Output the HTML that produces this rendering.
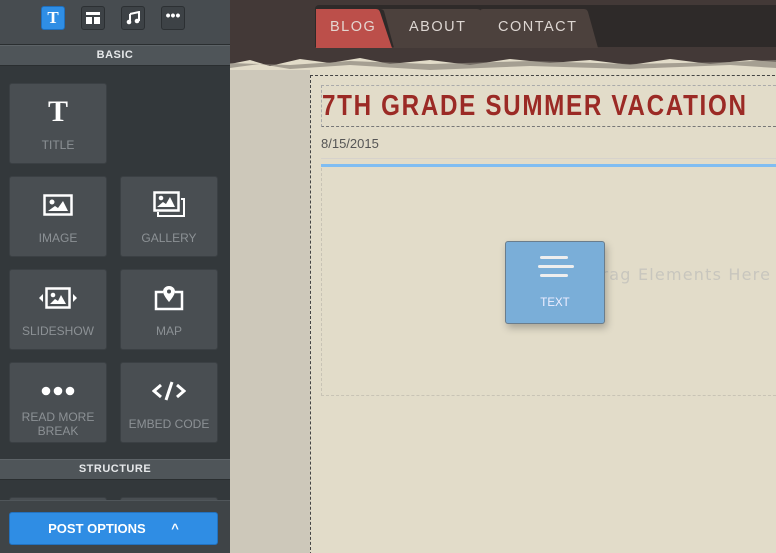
<!DOCTYPE html>
<html><head><style>
*{margin:0;padding:0;box-sizing:border-box}
html,body{width:776px;height:553px;overflow:hidden}
body{position:relative;font-family:"Liberation Sans",sans-serif;background:#e2dcc9}
.sb{position:absolute;left:0;top:0;width:230px;height:553px;background:#33383b;overflow:hidden}
.top{position:absolute;left:0;top:0;width:230px;height:45px;background:#474c50;border-bottom:1px solid #2a2e30}
.tb{position:absolute;top:6px;width:24px;height:24px;border-radius:3px;background:#3d4246;border:1px solid #2c3033;color:#fff;text-align:center;font-weight:bold;line-height:22px;font-size:14px}
.hdr{position:absolute;left:0;width:230px;height:21px;background:#4f5559;border-top:1px solid #5d6367;border-bottom:1px solid #2a2e30;color:#e6e8ea;font-size:11px;font-weight:bold;text-align:center;line-height:19px;letter-spacing:.5px}
.tile{position:absolute;width:98px;height:81px;background:#494e52;border:1px solid #3b4044;border-radius:3px;color:#8c9195;font-size:12px;text-align:center}
.tile .ic{position:absolute;left:0;right:0;top:14px;height:28px;display:flex;justify-content:center;align-items:center}
.tile .lb{position:absolute;left:0;right:0;top:54px;line-height:14px}
.main{position:absolute;left:230px;top:0;width:546px;height:553px;overflow:hidden}
</style></head><body>
<div class="sb">
 <div class="top">
  <div class="tb" style="left:41px;background:#2f8ee5;border-color:#1f6fbd;font-family:'Liberation Serif',serif;font-size:17px">T</div>
  <div class="tb" style="left:81px"><svg width="14" height="12" viewBox="0 0 14 12" style="margin-top:5px"><rect x="0" y="0" width="14" height="3" fill="#fff"/><rect x="0" y="5" width="6" height="7" fill="#fff"/><rect x="8" y="5" width="6" height="7" fill="#fff"/></svg></div>
  <div class="tb" style="left:121px"><svg width="14" height="14" viewBox="0 0 14 14" style="margin-top:4px"><path d="M4 3 L13 1 V10" stroke="#fff" stroke-width="2" fill="none"/><circle cx="3" cy="11" r="2.3" fill="#fff"/><circle cx="11" cy="10" r="2.3" fill="#fff"/><path d="M4 3V11" stroke="#fff" stroke-width="2"/></svg></div>
  <div class="tb" style="left:161px;line-height:16px">•••</div>
 </div>
 <div class="hdr" style="top:45px">BASIC</div>
 <div class="tile" style="left:9px;top:83px"><div class="ic" style="font-family:'Liberation Serif',serif;font-weight:bold;color:#fff;font-size:30px">T</div><div class="lb">TITLE</div></div>
 <div class="tile" style="left:9px;top:176px"><div class="ic"><svg width="30" height="22" viewBox="0 0 30 22"><rect x="1.5" y="1.5" width="27" height="19" fill="none" stroke="#fff" stroke-width="2.5"/><circle cx="9" cy="8" r="2.5" fill="#fff"/><path d="M5 17 L12 12 L15 14 L20 7 L25 17Z" fill="#fff"/></svg></div><div class="lb">IMAGE</div></div>
 <div class="tile" style="left:120px;top:176px"><div class="ic"><svg width="33" height="28" viewBox="0 0 33 28"><path d="M5 21 V25 H31 V8 H28" fill="none" stroke="#fff" stroke-width="2"/><rect x="1.5" y="1.5" width="24" height="18" fill="none" stroke="#fff" stroke-width="2.5"/><circle cx="8" cy="7" r="2.3" fill="#fff"/><path d="M4 16 L10 11 L13 13 L17 6 L22 16Z" fill="#fff"/></svg></div><div class="lb">GALLERY</div></div>
 <div class="tile" style="left:9px;top:269px"><div class="ic"><svg width="48" height="22" viewBox="0 0 48 22"><path d="M5 11 L9 7 V15Z M43 11 L39 7 V15Z" fill="#fff"/><rect x="12.5" y="1.5" width="23" height="19" fill="none" stroke="#fff" stroke-width="2.5"/><circle cx="19" cy="8" r="2.3" fill="#fff"/><path d="M16 17 L21 12 L24 14 L27 8 L32 17Z" fill="#fff"/></svg></div><div class="lb">SLIDESHOW</div></div>
 <div class="tile" style="left:120px;top:269px"><div class="ic"><svg width="30" height="26" viewBox="0 0 30 26"><path d="M9 7 H2 V24 H28 V7 H21" fill="none" stroke="#fff" stroke-width="2.5"/><path d="M15 1 C11 1 9 4 9 6.5 C9 10 15 17 15 17 C15 17 21 10 21 6.5 C21 4 19 1 15 1Z" fill="#fff"/><circle cx="15" cy="6.5" r="2" fill="#494e52"/></svg></div><div class="lb">MAP</div></div>
 <div class="tile" style="left:9px;top:362px"><div class="ic"><svg width="34" height="10" viewBox="0 0 34 10"><circle cx="5" cy="5" r="4.3" fill="#fff"/><circle cx="17" cy="5" r="4.3" fill="#fff"/><circle cx="29" cy="5" r="4.3" fill="#fff"/></svg></div><div class="lb" style="top:47px">READ MORE<br>BREAK</div></div>
 <div class="tile" style="left:120px;top:362px"><div class="ic"><svg width="34" height="22" viewBox="0 0 34 22"><path d="M9 5 L2 11 L9 17 M25 5 L32 11 L25 17 M20 2 L14 20" fill="none" stroke="#fff" stroke-width="3"/></svg></div><div class="lb">EMBED CODE</div></div>
 <div class="hdr" style="top:459px">STRUCTURE</div>
 <div class="tile" style="left:9px;top:497px;height:10px"></div>
 <div class="tile" style="left:120px;top:497px;height:10px"></div>
 <div style="position:absolute;left:0;top:500px;width:230px;height:53px;background:#3f4447;border-top:1px solid #50565a"></div>
 <div style="position:absolute;left:9px;top:512px;width:209px;height:33px;background:#2f8de4;border-radius:3px;border:1px solid #2272c0;color:#fff;font-weight:bold;font-size:13px;line-height:31px;text-align:center">POST OPTIONS <span style="margin-left:22px">^</span></div>
</div>
<div class="main">
 <div style="position:absolute;left:0;top:0;width:546px;height:58px;background:#433937"></div>
 <svg style="position:absolute;left:0;top:44px" width="546" height="30"><path d="M0 20 L20 16 L40 22 L70 15 L100 19 L130 14 L160 20 L200 16 L240 21 L280 15 L320 19 L360 16 L400 21 L440 15 L480 20 L520 16 L546 18 V0 H0Z" fill="#433937"/><path d="M0 24 L30 20 L60 25 L120 21 L200 26 L300 22 L400 25 L500 21 L546 24 V16 L500 18 L400 20 L300 17 L200 20 L120 17 L60 21 L0 19Z" fill="#8c857a" opacity=".7"/></svg>
 <div style="position:absolute;left:0;top:70px;width:80px;height:483px;background:#cdc8ba"></div>
 <div style="position:absolute;left:85px;top:5px;width:461px;height:42px;background:#2e2a29;border-radius:4px 0 0 0"></div>
 <svg style="position:absolute;left:86px;top:8px" width="290" height="40"><path d="M78 40 L68 3 Q67 1 64 1 H161 Q164 1 166 4 L175 40Z" fill="#4c413d"/><path d="M164 40 V4 Q164 1 167 1 H268 Q271 1 272 4 L282 40Z" fill="#4c413d"/><path d="M0 40 V1 H60 Q63 1 64 4 L76 40Z" fill="#bc4f4a"/></svg>
 <div style="position:absolute;left:100px;top:19px;color:#e4d6d0;font-size:14.5px;letter-spacing:1.5px">BLOG</div>
 <div style="position:absolute;left:179px;top:19px;color:#ddd6d2;font-size:14.5px;letter-spacing:1.5px">ABOUT</div>
 <div style="position:absolute;left:268px;top:19px;color:#ddd6d2;font-size:14.5px;letter-spacing:1.5px">CONTACT</div>
 <div style="position:absolute;left:80px;top:75px;width:470px;height:490px;border-left:1px dashed #444;border-top:1px dashed #444"></div>
 <div style="position:absolute;left:91px;top:85px;width:460px;height:42px;border:1px dashed #aaa;border-bottom-color:#777"></div>
 <div style="position:absolute;left:92px;top:90px;color:#9b2a25;font-size:29px;font-weight:bold;letter-spacing:2px;white-space:nowrap;transform:scaleX(.835);transform-origin:left">7TH GRADE SUMMER VACATION</div>
 <div style="position:absolute;left:91px;top:136px;color:#555;font-size:13px">8/15/2015</div>
 <div style="position:absolute;left:91px;top:158px;width:460px;height:1px;background:#d6d2cc"></div>
 <div style="position:absolute;left:91px;top:164px;width:460px;height:3px;background:#7fbdf2"></div>
 <div style="position:absolute;left:91px;top:168px;width:460px;height:228px;border-left:1px dashed #c8c3b5;border-bottom:1px dashed #c8c3b5"></div>
 <div style="position:absolute;left:358px;top:265px;color:#c8c6be;font-size:16px;letter-spacing:1.2px;white-space:nowrap;font-family:'DejaVu Sans',sans-serif">Drag Elements Here</div>
 <div style="position:absolute;left:275px;top:241px;width:100px;height:83px;background:#7aaed8;border:1px solid #6a7d8c;border-radius:3px;box-shadow:2px 4px 8px rgba(0,0,0,.25);color:#eef;font-size:11.5px;text-align:center">
  <svg style="position:absolute;left:32px;top:14px" width="36" height="24"><rect x="2" y="0" width="28" height="3" rx="1.5" fill="#eee"/><rect x="0" y="9" width="36" height="3" rx="1.5" fill="#eee"/><rect x="2" y="18" width="28" height="3" rx="1.5" fill="#eee"/></svg>
  <div style="position:absolute;left:0;right:0;top:55px">TEXT</div>
 </div>
</div>
</body></html>
